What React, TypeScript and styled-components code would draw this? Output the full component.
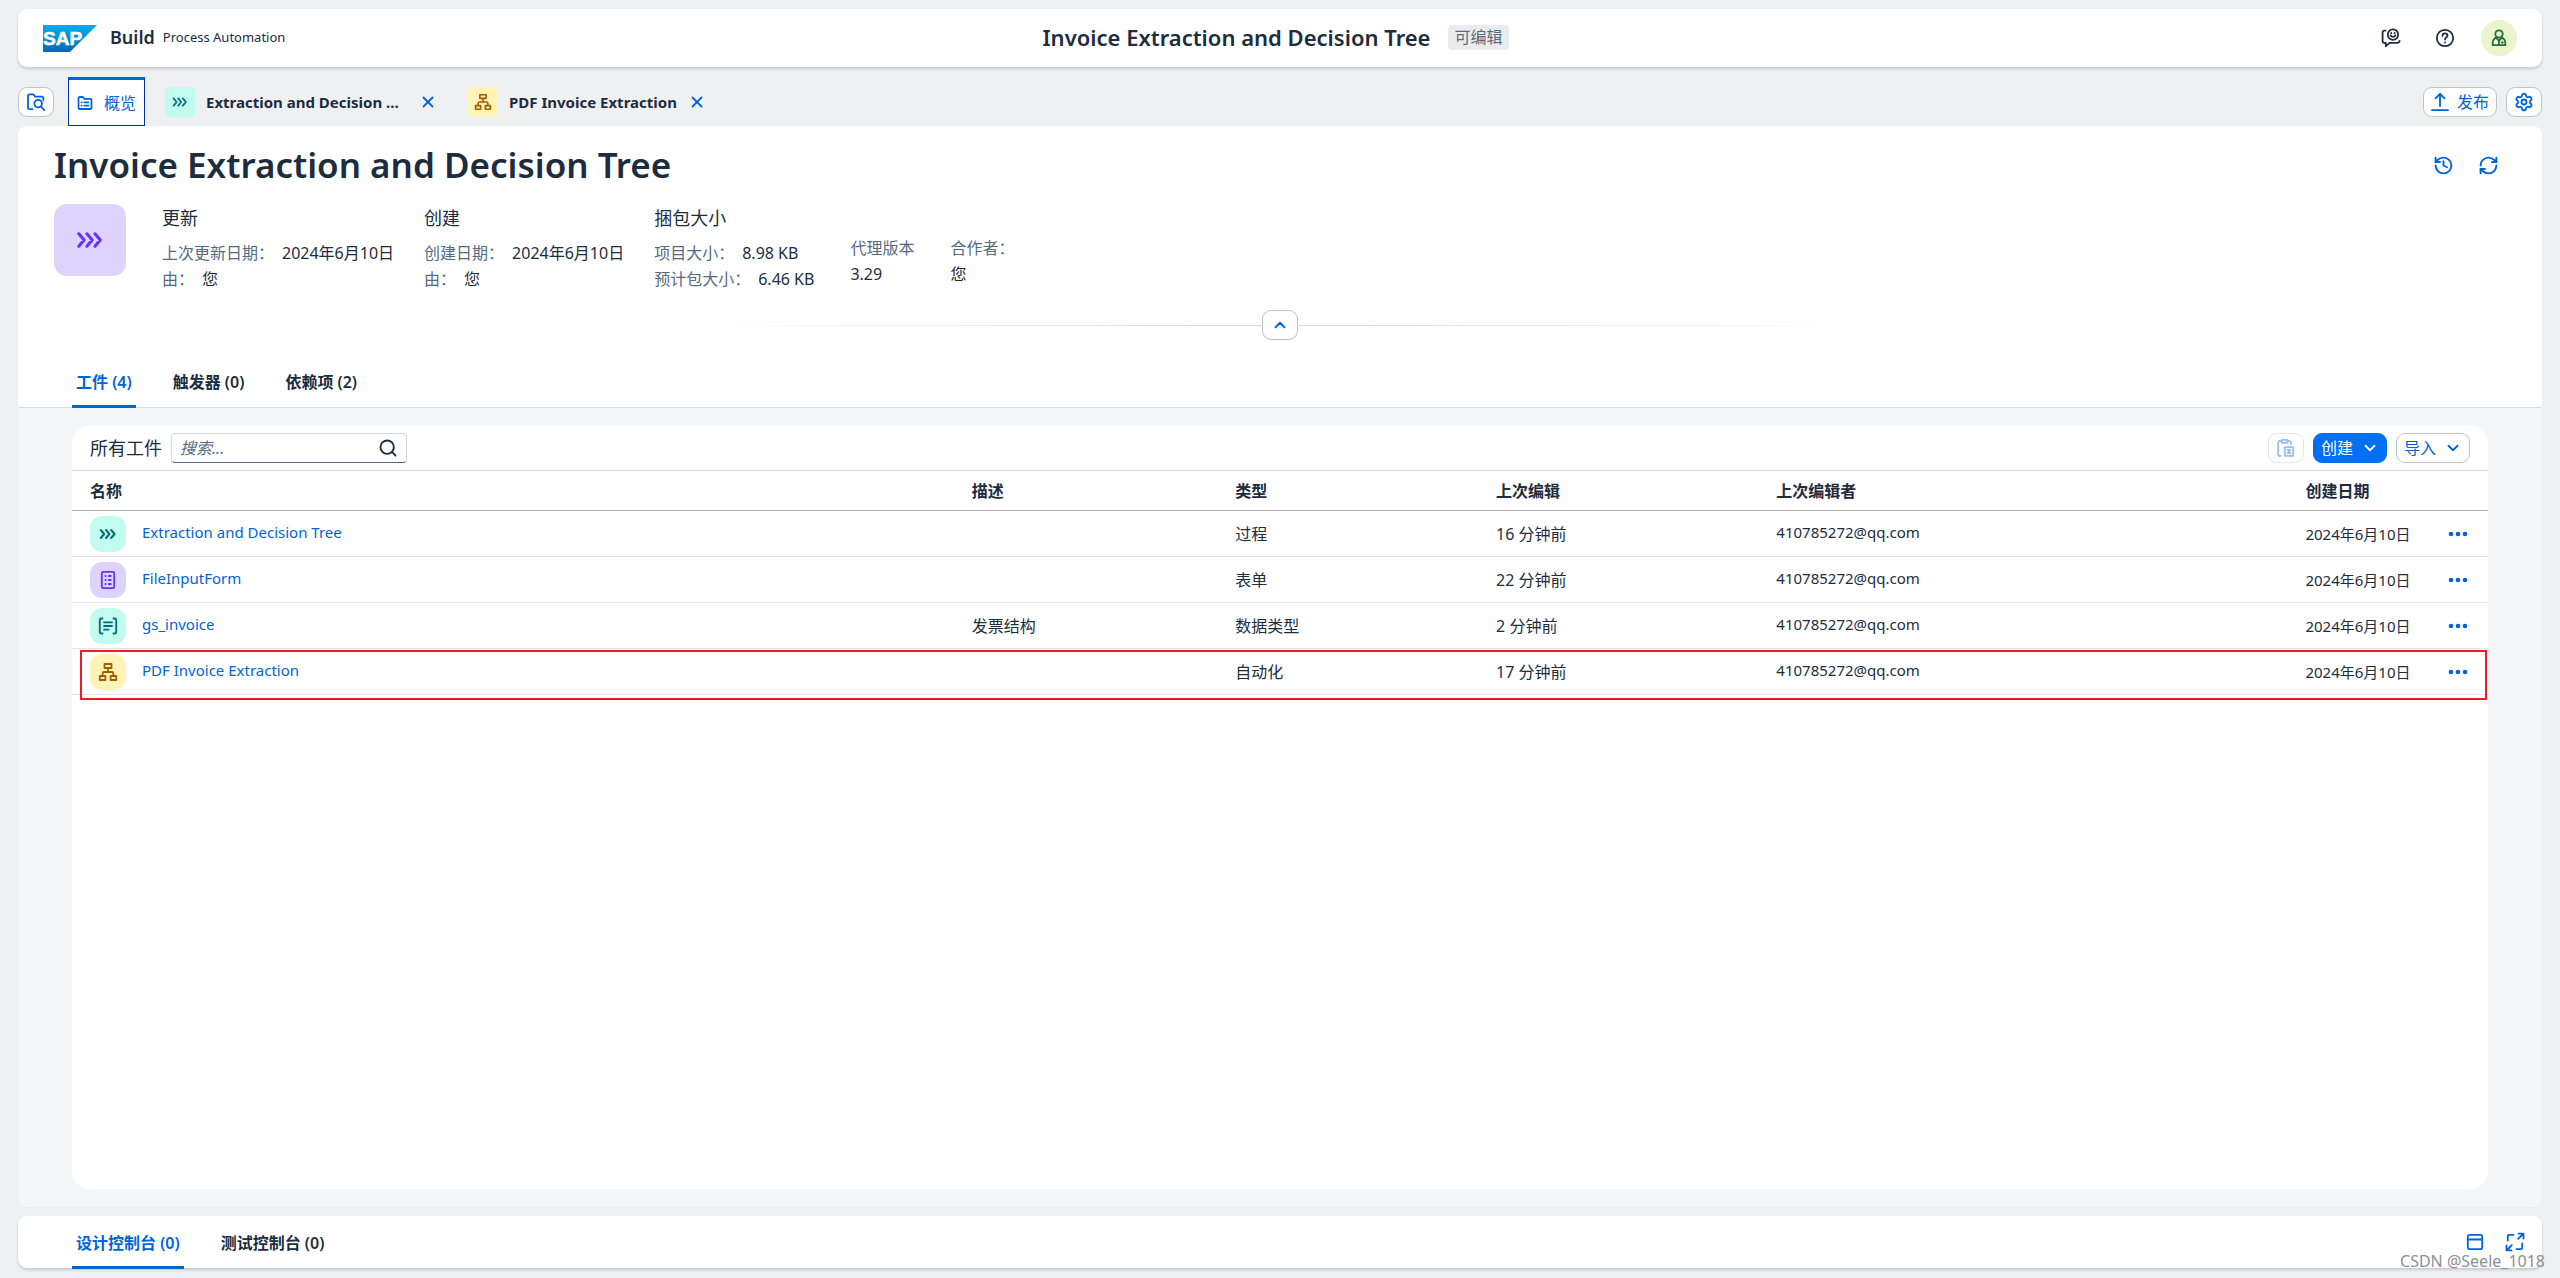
import React from 'react';
import styled, { createGlobalStyle, css } from 'styled-components';
import { ChevronDown, ChevronUp, History, RefreshCw, Search, Settings, X } from 'lucide-react';

const color = {
  shell: '#eff0f2',
  page: '#f5f6f8',
  white: '#ffffff',
  text: '#1d2d3e',
  label: '#556b82',
  link: '#0064d9',
  brand: '#0070f2',
  border: '#bcc3ca',
  line: '#d9d9d9',
  rowLine: '#e5e5e5',
  headLine: '#a8b2bd',
  mark: '#ed1c24',
};

const tones = {
  teal: { bg: '#c2fcee', fg: '#046c7a' },
  indigo: { bg: '#ded3ff', fg: '#5d36ff' },
  mango: { bg: '#fff3b8', fg: '#a45d00' },
};
type Tone = keyof typeof tones;

const GlobalStyle = createGlobalStyle`
  *, *::before, *::after { box-sizing: border-box; }
  body {
    margin: 0;
    background: ${color.shell};
    color: ${color.text};
    font-family: "Noto Sans", "Noto Sans CJK SC", sans-serif;
    font-size: 16px;
    line-height: 24px;
  }
  button, input { font: inherit; color: inherit; }
  h1, h2, h3, dl, dd { margin: 0; font-weight: inherit; }
  svg { display: block; flex: none; }
`;

/* ---------- icons ---------- */

const Stroke = styled.svg.attrs({ fill: 'none', stroke: 'currentColor', strokeLinecap: 'round', strokeLinejoin: 'round', 'aria-hidden': true })`
  stroke-width: 1.8;
`;

const FeedbackIcon = () => (
  <Stroke width="20" height="20" viewBox="0 0 20 20">
    <path d="M4.5 2.6H3.2A1.6 1.6 0 0 0 1.6 4.2v9a1.6 1.6 0 0 0 1.6 1.6h1.6v3.4l3.8-3.4h7.8a2 2 0 0 0 2.2-2" />
    <circle cx="12" cy="6.6" r="5.2" />
    <path d="M9.6 7.4c.8 2 4 2 4.8 0M10.3 5v.3M13.700 5v.3" />
  </Stroke>
);
const HelpIcon = () => (
  <Stroke width="20" height="20" viewBox="0 0 20 20">
    <circle cx="10" cy="10" r="8.2" />
    <path d="M7.5 7.8c0-3.4 5-3.2 5-.2 0 2-2.5 1.8-2.5 3.8M10 14.4v.1" />
  </Stroke>
);
const PersonIcon = () => (
  <Stroke width="18" height="18" viewBox="0 0 18 18">
    <circle cx="9" cy="5" r="3.7" />
    <path d="M6.2 8.6C3.8 9.6 2.7 11.6 2.7 14v2.2h12.600V14c0-2.4-1.1-4.4-3.5-5.4L9 12zM9 12v4M11.8 13.5h1" />
  </Stroke>
);
const FolderSearchIcon = () => (
  <Stroke width="20" height="20" viewBox="0 0 20 20">
    <path d="M6.5 17.2H3.6a1.6 1.6 0 0 1-1.6-1.6V4a1.6 1.6 0 0 1 1.6-1.600h3.6l2 2.2h6.6A1.6 1.6 0 0 1 17.400 6.200V8" />
    <circle cx="12.2" cy="11.6" r="3.8" />
    <path d="M15 14.5l3.2 3.6" />
  </Stroke>
);
const OverviewIcon = () => (
  <Stroke width="16" height="16" viewBox="0 0 16 16">
    <path d="M1.5 3.3A1.3 1.3 0 0 1 2.8 2h3l1.6 1.8h5.8a1.3 1.3 0 0 1 1.3 1.3v7.6a1.3 1.3 0 0 1-1.3 1.3H2.8a1.3 1.3 0 0 1-1.3-1.3zM4.6 7.3h.2M4.6 10.6h.2M7.4 7.3h4M7.4 10.6h4" />
  </Stroke>
);
const ProcessStroke = styled(Stroke)`
  stroke-width: 2;
`;
const ProcessIcon = ({ size = 18 }: { size?: number }) => (
  <ProcessStroke width={size} height={size} viewBox="0 0 18 18">
    <path d="M1.8 5l3.4 4-3.4 4M7 5l3.4 4L7 13M12.2 5l3.4 4-3.4 4" />
  </ProcessStroke>
);
const AutomationIcon = ({ size = 20 }: { size?: number }) => (
  <Stroke width={size} height={size} viewBox="0 0 20 20">
    <path d="M6.5 2h7v4h-7zM1.8 14h5.600v4H1.800zM12.6 14h5.600v4h-5.600zM10 6v4M4.6 14v-2.6A1.4 1.4 0 0 1 6 10h8a1.4 1.4 0 0 1 1.4 1.4V14" />
  </Stroke>
);
const FormIcon = () => (
  <Stroke width="20" height="20" viewBox="0 0 20 20">
    <rect x="3.8" y="1.8" width="12.4" height="16.4" rx="1.2" />
    <path d="M7.4 6h.3M7.4 10h.3M7.4 14h.3M10.8 6h2M10.8 10h2M10.8 14h2" />
  </Stroke>
);
const DataTypeIcon = () => (
  <Stroke width="20" height="20" viewBox="0 0 20 20">
    <path d="M4.5 2.5H3A1.2 1.2 0 0 0 1.8 3.7v12.6A1.2 1.2 0 0 0 3 17.5h1.5M15.5 2.5H17a1.2 1.2 0 0 1 1.2 1.2v12.600a1.2 1.2 0 0 1-1.2 1.2h-1.500M6 6.3h8M6 10h8M6 13.7h4.5" />
  </Stroke>
);
const PublishIcon = () => (
  <Stroke width="18" height="20" viewBox="0 0 18 20">
    <path d="M9 14V2M4.5 6.300L9 1.800l4.5 4.5M1 18.200h16" />
  </Stroke>
);
const PasteIcon = () => (
  <Stroke width="20" height="20" viewBox="0 0 20 20">
    <path d="M4.5 18H3.6A1.4 1.4 0 0 1 2.2 16.600V4.400A1.4 1.4 0 0 1 3.6 3H5M12.5 3h1a1.4 1.4 0 0 1 1.4 1.4V6M6 1.8h5.4v3H6z" />
    <path d="M8.8 9.2h8.4v8.600H8.800zM11.6 12h2.8M11.6 15h2.8M13 12v3" />
  </Stroke>
);
const MoreIcon = () => (
  <svg width="20" height="6" viewBox="0 0 20 6" fill="currentColor" aria-hidden="true">
    <circle cx="3" cy="3" r="2.3" />
    <circle cx="10" cy="3" r="2.3" />
    <circle cx="17" cy="3" r="2.3" />
  </svg>
);
const PanelIcon = () => (
  <Stroke width="18" height="18" viewBox="0 0 18 18">
    <rect x="1.8" y="1.8" width="14.4" height="14.4" rx="2" />
    <path d="M2 6.5h14" />
  </Stroke>
);
const ExpandIcon = () => (
  <Stroke width="20" height="20" viewBox="0 0 20 20">
    <path d="M8.5 2.8H4.2a1.4 1.4 0 0 0-1.4 1.4v4.3M11.5 17.2h4.300a1.4 1.4 0 0 0 1.4-1.4v-4.3M13.5 1.6h5v5M18 2l-4.8 4.8M6.5 18.4h-5v-5M2 18l4.8-4.8" />
  </Stroke>
);
const SapLogo = () => (
  <svg width="54" height="27" viewBox="0 0 54 27" role="img" aria-label="SAP">
    <defs>
      <linearGradient id="sapBlue" x1="0" y1="0" x2="0" y2="1">
        <stop offset="0" stopColor="#00b0f0" />
        <stop offset="1" stopColor="#0a66b8" />
      </linearGradient>
    </defs>
    <path d="M0 0h54L27 27H0z" fill="url(#sapBlue)" />
    <text x="0" y="20" fill="#fff" stroke="#fff" strokeWidth="0.6" fontFamily="Liberation Sans, Arial, sans-serif" fontWeight="700" fontSize="19">SAP</text>
  </svg>
);

/* ---------- shell ---------- */

const Shell = styled.div`
  position: relative;
  display: flex;
  flex-direction: column;
  min-height: 100vh;
  padding: 9px 18px 10px;
`;

const panelShadow = css`
  border-radius: 9px;
  background: ${color.white};
  box-shadow: 0 2px 3px rgba(34, 53, 72, 0.2);
`;

const TopBar = styled.header`
  ${panelShadow}
  display: grid;
  grid-template-columns: 1fr auto 1fr;
  align-items: center;
  height: 58px;
  padding: 0 25px;
`;

const Brand = styled.div`
  display: flex;
  align-items: center;
  gap: 13px;
`;
const Product = styled.div`
  display: flex;
  align-items: center;
  gap: 8px;
  padding-bottom: 2px;
`;
const ProductName = styled.span`
  font-size: 18px;
  font-weight: 600;
`;
const ProductArea = styled.span`
  font-size: 13px;
`;

const ProjectTitle = styled.div`
  display: flex;
  align-items: center;
  gap: 18px;
  padding: 0 9px 2px 0;
  font-size: 22px;
  font-weight: 600;
`;
const Badge = styled.span`
  padding: 0 6px;
  border-radius: 4px;
  background: #eaebed;
  color: ${color.label};
  font-size: 16px;
  font-weight: 400;
  line-height: 25px;
`;

const Actions = styled.div<{ $gap: number }>`
  display: flex;
  align-items: center;
  justify-content: flex-end;
  gap: ${p => p.$gap}px;
`;

const GhostButton = styled.button<{ $tint?: string }>`
  display: flex;
  align-items: center;
  justify-content: center;
  width: 36px;
  height: 30px;
  padding: 0;
  border: 0;
  background: none;
  color: ${p => p.$tint ?? color.link};
`;
const AvatarButton = styled(GhostButton)`
  height: 36px;
  border-radius: 50%;
  background: #eaf5cb;
  color: #256f3a;
`;

const Button = styled.button<{ $primary?: boolean }>`
  display: flex;
  align-items: center;
  justify-content: center;
  gap: 8px;
  min-width: 36px;
  height: 30px;
  padding: 0 7px;
  border: 1px solid ${p => (p.$primary ? color.brand : color.border)};
  border-radius: 9px;
  background: ${p => (p.$primary ? color.brand : color.white)};
  color: ${p => (p.$primary ? color.white : color.link)};
  &:disabled {
    opacity: 0.4;
  }
`;

/* ---------- editor tabs ---------- */

const EditorBar = styled.nav`
  display: flex;
  align-items: center;
  justify-content: space-between;
  margin-top: 10px;
`;
const EditorTabs = styled.div`
  display: flex;
  align-items: center;
`;
const OverviewTab = styled.button`
  display: flex;
  align-items: center;
  gap: 11px;
  height: 49px;
  margin: 0 3px 0 14px;
  padding: 0 8px;
  border: 1px solid #0032a5;
  border-top: 3px solid ${color.link};
  background: ${color.white};
  color: ${color.link};
`;
const EditorTab = styled.div`
  display: flex;
  align-items: center;
  gap: 11px;
  padding: 0 14px 0 17px;
`;
const TabName = styled.button<{ $clipped?: boolean }>`
  display: flex;
  align-items: center;
  gap: 11px;
  min-width: ${p => (p.$clipped ? '243px' : 'auto')};
  padding: 0;
  border: 0;
  background: none;
  font-size: 15px;
  font-weight: 700;
`;
const CloseButton = styled.button`
  padding: 0;
  border: 0;
  background: none;
  color: ${color.link};
`;

const Tile = styled.span<{ $tone: Tone; $size: number; $radius: number }>`
  display: flex;
  align-items: center;
  justify-content: center;
  flex: none;
  width: ${p => p.$size}px;
  height: ${p => p.$size}px;
  border-radius: ${p => p.$radius}px;
  background: ${p => tones[p.$tone].bg};
  color: ${p => tones[p.$tone].fg};
`;

/* ---------- project page ---------- */

const Page = styled.main`
  display: flex;
  flex: 1;
  flex-direction: column;
  border-radius: 9px;
  background: ${color.page};
`;
const PageHead = styled.section`
  padding: 18px 36px 0;
  border-bottom: 1px solid ${color.line};
  border-radius: 9px 9px 0 0;
  background: ${color.white};
`;
const TitleRow = styled.div`
  display: flex;
  align-items: center;
  justify-content: space-between;
  height: 42px;
`;
const Title = styled.h1`
  font-size: 35px;
  font-weight: 600;
  line-height: 42px;
`;
const Facets = styled.div`
  display: flex;
  gap: 30px;
  margin-top: 18px;
`;
const ProjectTile = styled(Tile)`
  margin-right: 6px;
`;
const Facet = styled.section<{ $stacked?: boolean }>`
  padding: ${p => (p.$stacked ? '31px 0 0 6px' : 0)};
  font-size: 16px;
  line-height: 26px;
`;
const FacetTitle = styled.h2`
  margin-bottom: 8px;
  font-size: 18px;
  line-height: 28px;
`;
const Pair = styled.dl<{ $stacked?: boolean }>`
  display: flex;
  flex-direction: ${p => (p.$stacked ? 'column' : 'row')};
  gap: ${p => (p.$stacked ? 0 : 8)}px;
`;
const Term = styled.dt`
  color: ${color.label};
`;

const CollapseBar = styled.div`
  display: flex;
  align-items: center;
  justify-content: center;
  margin-top: 18px;
`;
const FadeLine = styled.span<{ $to: string }>`
  width: 590px;
  height: 1px;
  background: linear-gradient(to ${p => p.$to}, ${color.line}, transparent);
`;

const TabList = styled.div<{ $height: number }>`
  display: flex;
  gap: 33px;
  height: ${p => p.$height}px;
  padding-left: 18px;
`;
const Tab = styled.button<{ $active?: boolean }>`
  height: 100%;
  padding: 3px 4px 0;
  border: 0;
  border-bottom: 3px solid ${p => (p.$active ? color.link : 'transparent')};
  background: none;
  color: ${p => (p.$active ? color.link : color.text)};
  font-weight: 600;
`;
const PageTabs = styled(TabList)`
  margin: 16px 0 -1px;
`;
const ConsoleTabs = styled(TabList)`
  margin-bottom: -1px;
`;

/* ---------- artifacts ---------- */

const Card = styled.section`
  flex: 1;
  margin: 18px 54px;
  border-radius: 18px;
  background: ${color.white};
`;
const Toolbar = styled.div`
  display: flex;
  align-items: center;
  gap: 9px;
  height: 45px;
  padding: 0 18px;
  border-bottom: 1px solid ${color.line};
`;
const ToolbarTitle = styled.h3`
  font-size: 18px;
`;
const SearchField = styled.label`
  display: flex;
  align-items: center;
  width: 236px;
  height: 30px;
  margin-right: auto;
  padding: 0 8px;
  border: 1px solid #d3d7db;
  border-bottom-color: ${color.label};
  border-radius: 4px;
  background: ${color.white};
`;
const SearchInput = styled.input`
  flex: 1;
  min-width: 0;
  padding: 0;
  border: 0;
  outline: 0;
  background: none;
  &::placeholder {
    color: ${color.label};
    font-style: italic;
    opacity: 1;
  }
`;

const Table = styled.table`
  width: 100%;
  table-layout: fixed;
  border-collapse: separate;
  border-spacing: 0;
  text-align: left;
`;
const Col = styled.col<{ $width: string }>`
  width: ${p => p.$width};
`;
const HeadCell = styled.th`
  height: 40px;
  padding: 0 18px;
  border-bottom: 1px solid ${color.headLine};
  font-weight: 600;
`;
const Row = styled.tr`
  position: relative;
`;
const Cell = styled.td<{ $latin?: boolean }>`
  height: 46px;
  padding: 0 18px ${p => (p.$latin ? 3 : 0)}px;
  border-bottom: 1px solid ${color.rowLine};
  font-size: ${p => (p.$latin ? 15 : 16)}px;
  white-space: nowrap;
`;
const DateCell = styled(Cell)`
  font-size: 15px;
`;
const NameCell = styled.div`
  display: flex;
  align-items: center;
  gap: 16px;
  font-size: 15px;
`;
const Link = styled.a`
  padding-bottom: 3px;
  color: ${color.link};
  text-decoration: none;
`;
const RowAction = styled(GhostButton)`
  margin-left: -10px;
`;
const Highlight = styled.span`
  position: absolute;
  inset: 1px 1px -5px 8px;
  border: 2px solid ${color.mark};
  pointer-events: none;
`;

/* ---------- console ---------- */

const ConsoleBar = styled.footer`
  ${panelShadow}
  display: flex;
  align-items: center;
  justify-content: space-between;
  height: 52px;
  margin-top: 9px;
  padding: 0 9px 0 36px;
`;
const Watermark = styled.span`
  position: absolute;
  right: 15px;
  bottom: 5px;
  color: #8c8f93;
`;

type Artifact = {
  name: string;
  tone: Tone;
  icon: React.ReactNode;
  description?: string;
  type: string;
  edited: string;
  marked?: boolean;
};

const artifacts: Artifact[] = [
  { name: 'Extraction and Decision Tree', tone: 'teal', icon: <ProcessIcon />, type: '过程', edited: '16 分钟前' },
  { name: 'FileInputForm', tone: 'indigo', icon: <FormIcon />, type: '表单', edited: '22 分钟前' },
  { name: 'gs_invoice', tone: 'teal', icon: <DataTypeIcon />, description: '发票结构', type: '数据类型', edited: '2 分钟前' },
  { name: 'PDF Invoice Extraction', tone: 'mango', icon: <AutomationIcon />, type: '自动化', edited: '17 分钟前', marked: true },
];

const columns = [
  { title: '名称', width: '36.5%' },
  { title: '描述', width: '10.9%' },
  { title: '类型', width: '10.8%' },
  { title: '上次编辑', width: '11.6%' },
  { title: '上次编辑者', width: '21.9%' },
  { title: '创建日期', width: '6%' },
  { title: '', width: '2.3%' },
];

const facets = [
  { title: '更新', pairs: [['上次更新日期：', '2024年6月10日'], ['由：', '您']] },
  { title: '创建', pairs: [['创建日期：', '2024年6月10日'], ['由：', '您']] },
  { title: '捆包大小', pairs: [['项目大小：', '8.98 KB'], ['预计包大小：', '6.46 KB']] },
];

export default function App() {
  return (
    <>
      <GlobalStyle />
      <Shell>
        <TopBar>
          <Brand>
            <SapLogo />
            <Product>
              <ProductName>Build</ProductName>
              <ProductArea>Process Automation</ProductArea>
            </Product>
          </Brand>
          <ProjectTitle>
            Invoice Extraction and Decision Tree
            <Badge>可编辑</Badge>
          </ProjectTitle>
          <Actions $gap={18}>
            <GhostButton $tint={color.text} aria-label="反馈"><FeedbackIcon /></GhostButton>
            <GhostButton $tint={color.text} aria-label="帮助"><HelpIcon /></GhostButton>
            <AvatarButton aria-label="用户"><PersonIcon /></AvatarButton>
          </Actions>
        </TopBar>

        <EditorBar>
          <EditorTabs>
            <Button aria-label="浏览项目"><FolderSearchIcon /></Button>
            <OverviewTab><OverviewIcon />概览</OverviewTab>
            <EditorTab>
              <TabName $clipped>
                <Tile $tone="teal" $size={30} $radius={4}><ProcessIcon size={16} /></Tile>
                Extraction and Decision ...
              </TabName>
              <CloseButton aria-label="关闭"><X size={18} strokeWidth={2.4} /></CloseButton>
            </EditorTab>
            <EditorTab>
              <TabName>
                <Tile $tone="mango" $size={30} $radius={4}><AutomationIcon size={18} /></Tile>
                PDF Invoice Extraction
              </TabName>
              <CloseButton aria-label="关闭"><X size={18} strokeWidth={2.4} /></CloseButton>
            </EditorTab>
          </EditorTabs>
          <Actions $gap={9}>
            <Button><PublishIcon />发布</Button>
            <Button aria-label="设置"><Settings size={20} strokeWidth={2.2} /></Button>
          </Actions>
        </EditorBar>

        <Page>
          <PageHead>
            <TitleRow>
              <Title>Invoice Extraction and Decision Tree</Title>
              <Actions $gap={9}>
                <GhostButton aria-label="历史"><History size={21} strokeWidth={2.2} /></GhostButton>
                <GhostButton aria-label="刷新"><RefreshCw size={21} strokeWidth={2.2} /></GhostButton>
              </Actions>
            </TitleRow>
            <Facets>
              <ProjectTile $tone="indigo" $size={72} $radius={13}><ProcessIcon size={28} /></ProjectTile>
              {facets.map(f => (
                <Facet key={f.title}>
                  <FacetTitle>{f.title}</FacetTitle>
                  {f.pairs.map(([term, value]) => (
                    <Pair key={term}>
                      <Term>{term}</Term>
                      <dd>{value}</dd>
                    </Pair>
                  ))}
                </Facet>
              ))}
              <Facet $stacked>
                <Pair $stacked><Term>代理版本</Term><dd>3.29</dd></Pair>
              </Facet>
              <Facet $stacked>
                <Pair $stacked><Term>合作者：</Term><dd>您</dd></Pair>
              </Facet>
            </Facets>
            <CollapseBar>
              <FadeLine $to="left" />
              <Button aria-label="折叠标题"><ChevronUp size={18} strokeWidth={2.4} /></Button>
              <FadeLine $to="right" />
            </CollapseBar>
            <PageTabs $height={52} role="tablist">
              <Tab role="tab" $active aria-selected>工件 (4)</Tab>
              <Tab role="tab">触发器 (0)</Tab>
              <Tab role="tab">依赖项 (2)</Tab>
            </PageTabs>
          </PageHead>

          <Card>
            <Toolbar>
              <ToolbarTitle>所有工件</ToolbarTitle>
              <SearchField>
                <SearchInput type="text" placeholder="搜索..." aria-label="搜索" />
                <Search size={20} strokeWidth={2.2} />
              </SearchField>
              <Button disabled aria-label="粘贴"><PasteIcon /></Button>
              <Button $primary aria-haspopup="menu">创建<ChevronDown size={18} strokeWidth={2.4} /></Button>
              <Button aria-haspopup="menu">导入<ChevronDown size={18} strokeWidth={2.4} /></Button>
            </Toolbar>
            <Table>
              <colgroup>
                {columns.map(c => <Col key={c.title} $width={c.width} />)}
              </colgroup>
              <thead>
                <tr>{columns.map(c => <HeadCell key={c.title}>{c.title}</HeadCell>)}</tr>
              </thead>
              <tbody>
                {artifacts.map(a => (
                  <Row key={a.name}>
                    <Cell>
                      <NameCell>
                        <Tile $tone={a.tone} $size={36} $radius={12}>{a.icon}</Tile>
                        <Link href="#">{a.name}</Link>
                      </NameCell>
                      {a.marked && <Highlight />}
                    </Cell>
                    <Cell>{a.description}</Cell>
                    <Cell>{a.type}</Cell>
                    <Cell>{a.edited}</Cell>
                    <Cell $latin>410785272@qq.com</Cell>
                    <DateCell>2024年6月10日</DateCell>
                    <Cell><RowAction aria-label="更多"><MoreIcon /></RowAction></Cell>
                  </Row>
                ))}
              </tbody>
            </Table>
          </Card>
        </Page>

        <ConsoleBar>
          <ConsoleTabs $height={53} role="tablist">
            <Tab role="tab" $active aria-selected>设计控制台 (0)</Tab>
            <Tab role="tab">测试控制台 (0)</Tab>
          </ConsoleTabs>
          <Actions $gap={4}>
            <GhostButton aria-label="显示面板"><PanelIcon /></GhostButton>
            <GhostButton aria-label="全屏"><ExpandIcon /></GhostButton>
          </Actions>
        </ConsoleBar>
        <Watermark>CSDN @Seele_1018</Watermark>
      </Shell>
    </>
  );
}
